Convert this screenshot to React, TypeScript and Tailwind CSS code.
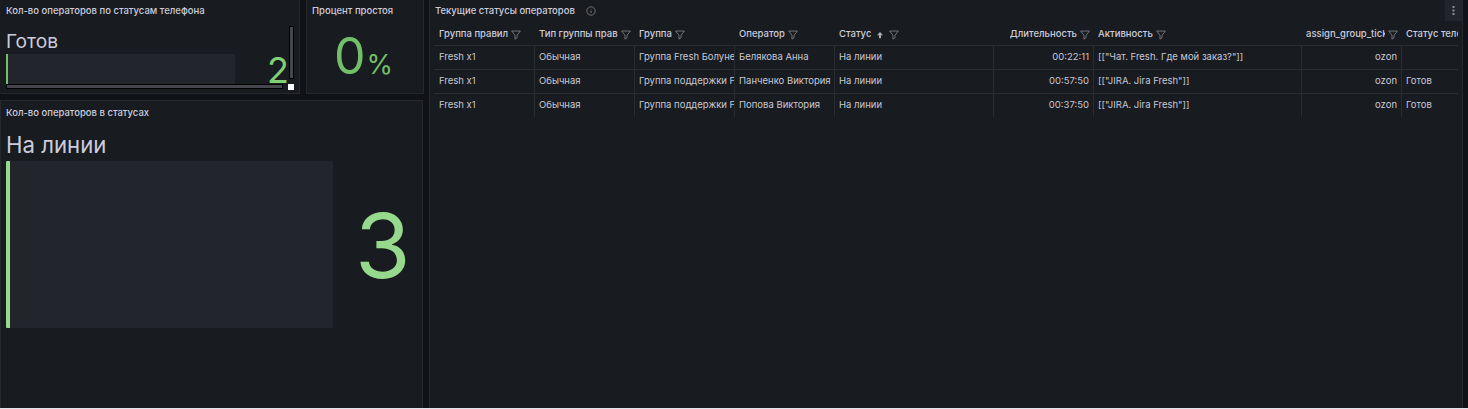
import React from "react";

const Filter = () => (
  <svg width="10" height="10" viewBox="0 0 24 24" fill="none" stroke="#8e9097" strokeWidth="1.8" strokeLinejoin="round" className="shrink-0">
    <path d="M1.5 2.5h21l-8 10v6l-5 3.5v-9.500z" />
  </svg>
);

const SortUp = () => (
  <svg width="8" height="8" viewBox="0 0 8 8" fill="#a9abb4" className="shrink-0">
    <path d="M4 1 7 4.200H5v3H3v-3H1z" />
  </svg>
);

const cols = [
  { w: "w-[100px]", name: "Группа правил" },
  { w: "w-[100px]", name: "Тип группы прав" },
  { w: "w-[100px]", name: "Группа" },
  { w: "w-[100px]", name: "Оператор" },
  { w: "w-[159px]", name: "Статус", sort: true },
  { w: "w-[100px]", name: "Длительность", right: true },
  { w: "w-[208px]", name: "Активность" },
  { w: "w-[100px]", name: "assign_group_ticket", right: true },
  { w: "w-[100px]", name: "Статус телефона" },
];

const rows = [
  ["Fresh x1", "Обычная", "Группа Fresh Болунежная", "Белякова Анна", "На линии", "00:22:11", '[["Чат. Fresh. Где мой заказ?"]]', "ozon", ""],
  ["Fresh x1", "Обычная", "Группа поддержки Fresh", "Панченко Виктория", "На линии", "00:57:50", '[["JIRA. Jira Fresh"]]', "ozon", "Готов"],
  ["Fresh x1", "Обычная", "Группа поддержки Fresh", "Попова Виктория", "На линии", "00:37:50", '[["JIRA. Jira Fresh"]]', "ozon", "Готов"],
];

export default function App() {
  return (
    <div className="h-[409px] w-[1468px] overflow-hidden bg-[#111217] font-['Inter',sans-serif] text-[#ccccdc] flex flex-col">
      <div className="h-[408px] flex shrink-0">
        {/* left column */}
        <div className="w-[424px] shrink-0 flex flex-col gap-[6px]">
          <div className="h-[94px] flex gap-[6px] shrink-0">
            <div className="w-[300px] bg-[#181b1f] border-r border-b border-[#26282d] relative">
              <div className="text-[9.500px] font-medium leading-[12px] pl-[6px] pt-[5px]">Кол-во операторов по статусам телефона</div>
              <div className="text-[19.200px] leading-[24px] pl-[6px] mt-[12px]">Готов</div>
              <div className="ml-[6px] mt-[1px] h-[30px] w-[229px] bg-[#22252b] border-l-2 border-[#73bf69]" />
              <div className="absolute left-[267px] top-[50px] text-[36px] leading-[40px] text-[#7fd073]">2</div>
              <div className="absolute left-[289px] top-[26px] w-[5px] h-[53px] bg-[#46464f] border border-black" />
              <div className="absolute left-[6px] top-[84px] w-[277px] h-[5px] bg-[#46464f] border border-black" />
              <div className="absolute left-[288px] top-[84px] w-[6px] h-[6px] bg-white" />
            </div>
            <div className="flex-1 bg-[#181b1f] border-x border-b border-[#26282d]">
              <div className="text-[9.500px] font-medium leading-[12px] pl-[5px] pt-[5px]">Процент простоя</div>
              <div className="flex items-baseline justify-center mt-[9px] text-[#73bf69] pr-[3px]">
                <span className="text-[50px] leading-[60px]">0</span>
                <span className="text-[27px] leading-[30px] ml-[1px]">%</span>
              </div>
            </div>
          </div>
          <div className="flex-1 bg-[#181b1f] border border-[#26282d] border-b-0 flex flex-col mr-[1px]">
            <div className="text-[9.500px] font-medium leading-[12px] pl-[5px] pt-[6px]">Кол-во операторов в статусах</div>
            <div className="text-[22.200px] leading-[26px] pl-[5px] mt-[13px]">На линии</div>
            <div className="flex items-center mt-[3px]">
              <div className="ml-[5px] h-[167px] w-[327px] bg-[#22252b] border-l-[4px] border-[#96d98d] rounded-[1px]" />
              <div className="ml-[22px] text-[90px] leading-[100px] text-[#96d98d] mt-[2px]">3</div>
            </div>
          </div>
        </div>

        {/* right panel */}
        <div className="ml-[5px] w-[1034px] shrink-0 bg-[#181b1f] border-x border-[#26282d] relative">
          <div className="h-[22px] flex items-center pl-[5px] gap-[11px] pb-[1px]">
            <span className="text-[9.500px] font-medium leading-[12px]">Текущие статусы операторов</span>
            <svg width="10" height="10" viewBox="0 0 24 24" fill="none" stroke="#7e8087" strokeWidth="2">
              <circle cx="12" cy="12" r="10" />
              <path d="M12 11v6M12 7v1" />
            </svg>
          </div>
          <div className="absolute right-0 top-0 w-[17px] h-[21px] bg-[#22252b] flex items-center justify-center">
            <svg width="3" height="9" viewBox="0 0 3 9" fill="#8e9097">
              <rect x="0.500" y="0" width="2" height="2" />
              <rect x="0.500" y="3.500" width="2" height="2" />
              <rect x="0.500" y="7" width="2" height="2" />
            </svg>
          </div>
          <div className="ml-[4px] w-[1024px] overflow-hidden text-[9.500px]">
            <div className="flex h-[24px] pt-[2px] border-b border-[#2a2c31] font-medium w-max">
              {cols.map((c) => (
                <div key={c.name} className={`${c.w} shrink-0 flex items-center pl-[5px] pr-[3px] gap-[3px] overflow-hidden ${c.right ? "justify-end" : ""}`}>
                  <span className="whitespace-nowrap overflow-hidden">{c.name}</span>
                  {c.sort && <span className="ml-[2px] mr-[2px] flex"><SortUp /></span>}
                  {c.name !== "Статус телефона" && <Filter />}
                </div>
              ))}
            </div>
            {rows.map((r, i) => (
              <div key={i} className={`flex w-max ${i < 2 ? "h-[24px] border-b border-[#2a2c31]" : "h-[23px]"}`}>
                {r.map((v, j) => (
                  <div key={j} className={`${cols[j].w} shrink-0 flex items-center overflow-hidden whitespace-nowrap text-[#c8c8d6] ${j > 0 ? "border-l border-[#2a2c31] pl-[4px]" : "pl-[5px]"} ${cols[j].right ? "justify-end pr-[4px]" : "pr-[5px]"}`}>
                    {v}
                  </div>
                ))}
              </div>
            ))}
          </div>
        </div>
      </div>
      <div className="h-[1px] shrink-0 bg-[#dfe4ea]" />
    </div>
  );
}
